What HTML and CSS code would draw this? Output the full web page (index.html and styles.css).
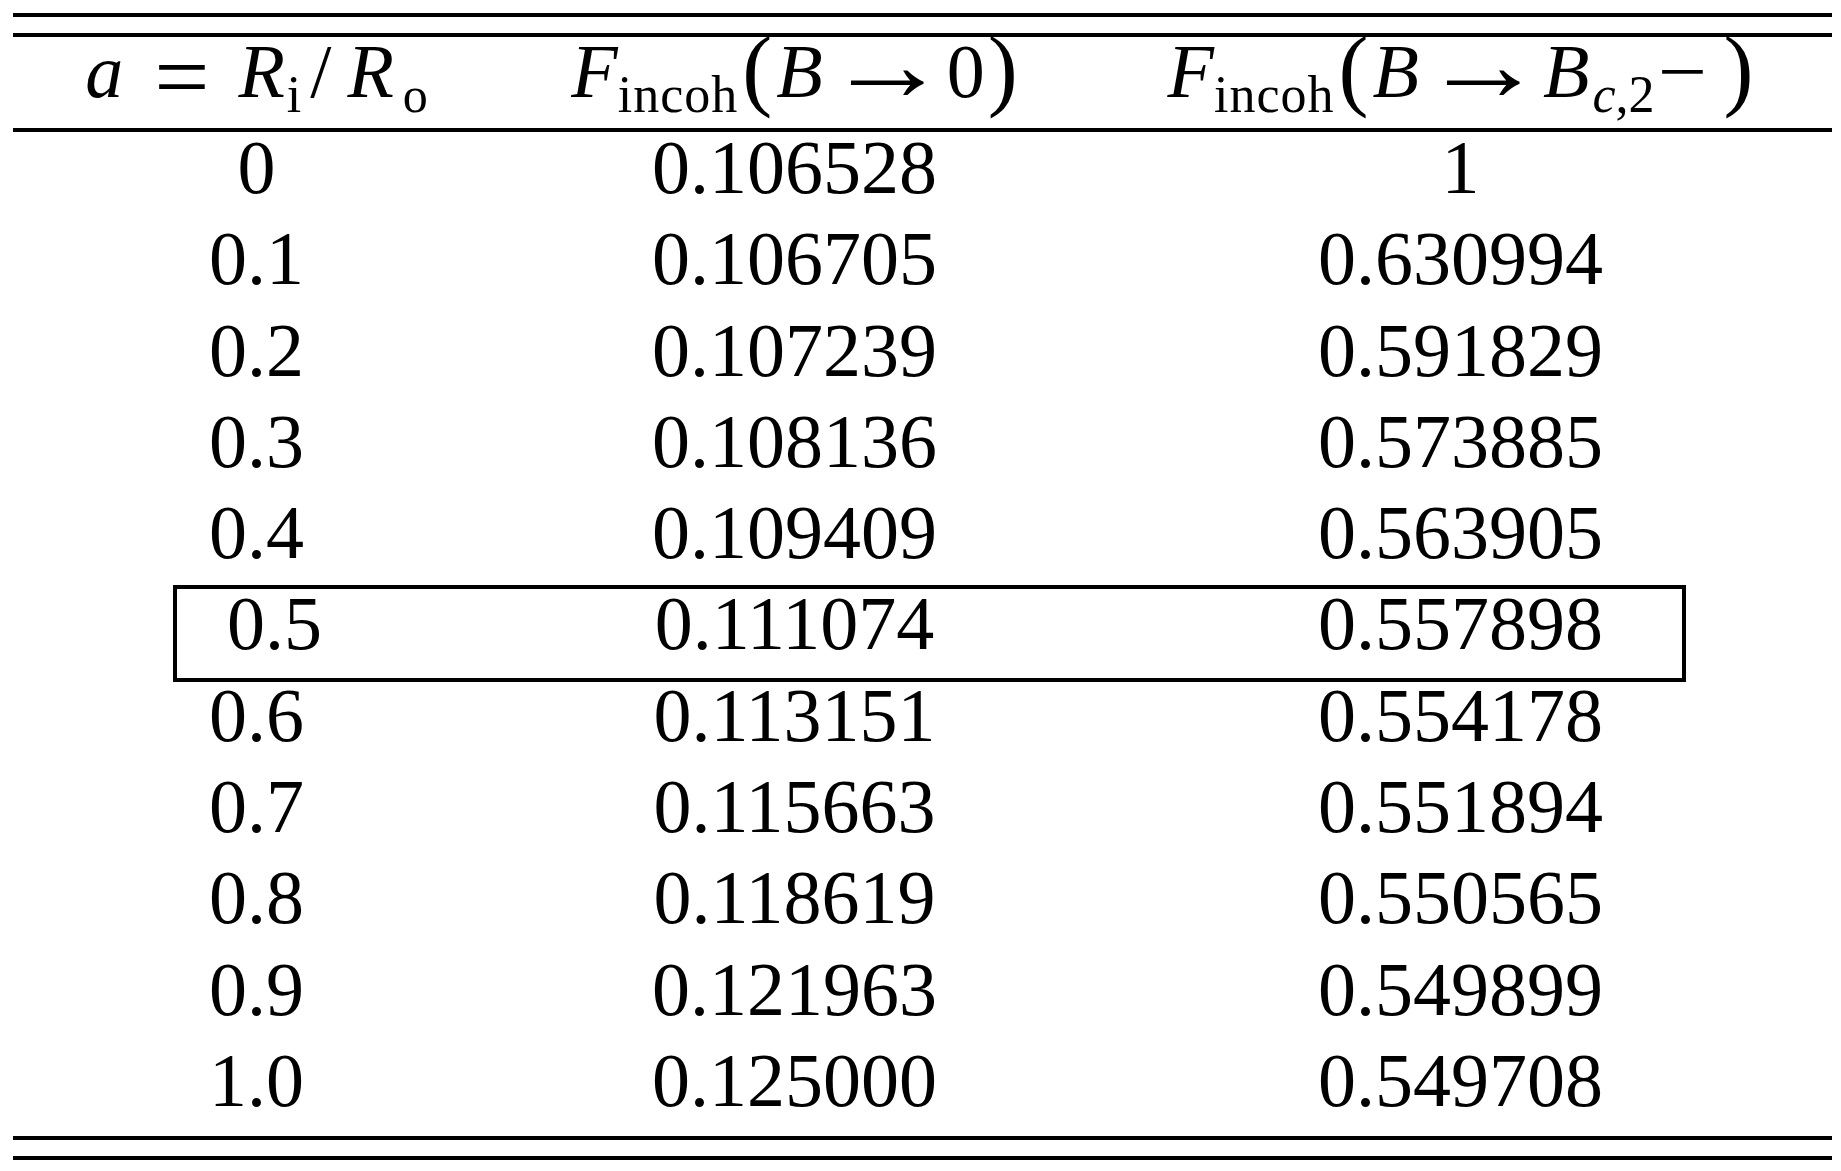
FILE: index.html
```html
<!DOCTYPE html>
<html lang="en">
<head>
<meta charset="utf-8">
<title>Table</title>
<link rel="stylesheet" href="styles.css">
</head>
<body>
<div class="frame">
  <table class="data">
    <colgroup><col class="c1"><col class="c2"><col class="c3"></colgroup>
    <thead>
      <tr>
        <th><span class="mi">a</span><span class="eq">=</span><span class="mi">R</span><span class="sb sbi">i</span><span class="slash">/</span><span class="mi">R</span><span class="sb sbo">o</span></th>
        <th><span class="mi">F</span><span class="sb sbw">incoh</span><span class="bigp">(</span><span class="mi">B</span><span class="arr">→</span><span>0</span><span class="bigp rp">)</span></th>
        <th><span class="mi">F</span><span class="sb sbw">incoh</span><span class="bigp">(</span><span class="mi">B</span><span class="arr">→</span><span class="mi">B</span><span class="sb sbc"><span class="smi">c</span>,2</span><span class="bin">−</span><span class="bigp rp3">)</span></th>
      </tr>
    </thead>
    <tbody>
      <tr><td>0</td><td>0.106528</td><td>1</td></tr>
      <tr><td>0.1</td><td>0.106705</td><td>0.630994</td></tr>
      <tr><td>0.2</td><td>0.107239</td><td>0.591829</td></tr>
      <tr><td>0.3</td><td>0.108136</td><td>0.573885</td></tr>
      <tr><td>0.4</td><td>0.109409</td><td>0.563905</td></tr>
      <tr><td class="hl">0.5<span class="box"></span></td><td>0.111074</td><td>0.557898</td></tr>
      <tr><td>0.6</td><td>0.113151</td><td>0.554178</td></tr>
      <tr><td>0.7</td><td>0.115663</td><td>0.551894</td></tr>
      <tr><td>0.8</td><td>0.118619</td><td>0.550565</td></tr>
      <tr><td>0.9</td><td>0.121963</td><td>0.549899</td></tr>
      <tr><td>1.0</td><td>0.125000</td><td>0.549708</td></tr>
    </tbody>
  </table>
</div>
</body>
</html>
```

FILE: styles.css
```css
html, body {
  margin: 0;
  padding: 0;
  background: #ffffff;
  color: #000000;
  font-family: "Liberation Serif", "Times New Roman", serif;
}

.frame {
  margin: 13px 0 0 13px;
  width: 1819px;
  border-top: 4px solid #000;
  border-bottom: 4px solid #000;
  padding: 16px 0;
}

.data {
  width: 1819px;
  table-layout: fixed;
  border-collapse: separate;
  border-spacing: 0;
  border-top: 4px solid #000;
  border-bottom: 4px solid #000;
  font-size: 76px;
}

.c1 { width: 487px; }
.c2 { width: 589px; }
.c3 { width: 743px; }

.data th,
.data td {
  padding: 0 0 17.3px 0;
  line-height: 74px;
  text-align: center;
  font-weight: normal;
  white-space: nowrap;
}

.data th {
  padding-top: 0;
  padding-bottom: 22px;
  line-height: 69px;
  border-bottom: 4px solid #000;
}

.data td {
  position: relative;
  top: -2px;
}

.mi,
.smi {
  font-style: italic;
}

.sb {
  font-size: 52px;
  line-height: 0;
  vertical-align: -15px;
  font-style: normal;
}

.sbw {
  letter-spacing: 1px;
}

.sbi {
  margin-left: 2px;
}

.sbo {
  font-size: 50px;
  margin-left: 9px;
}

.sbc {
  margin-left: 3px;
}

.eq {
  font-size: 98px;
  line-height: 0;
  vertical-align: -12px;
  margin: 0 29px 0 31px;
}

.arr {
  display: inline-block;
  font-size: 104px;
  line-height: 0;
  vertical-align: -3px;
  transform: scaleX(1.18);
  margin: 0 8px 0 12px;
}

.slash {
  margin: 0 16px 0 9px;
}

.bin {
  display: inline-block;
  transform: scaleX(1.15);
  margin-left: 6px;
}

.bigp {
  font-size: 90px;
  line-height: 0;
  vertical-align: -2px;
  margin: 0 4px 0 4px;
}

.rp {
  margin: 0 0 0 3px;
}

.rp3 {
  margin: 0 0 0 20px;
}

.hl {
  padding-left: 36px !important;
}

.box {
  position: absolute;
  left: 160px;
  top: -1.5px;
  width: 1513px;
  height: 97px;
  box-sizing: border-box;
  border: 4px solid #000;
}
```
